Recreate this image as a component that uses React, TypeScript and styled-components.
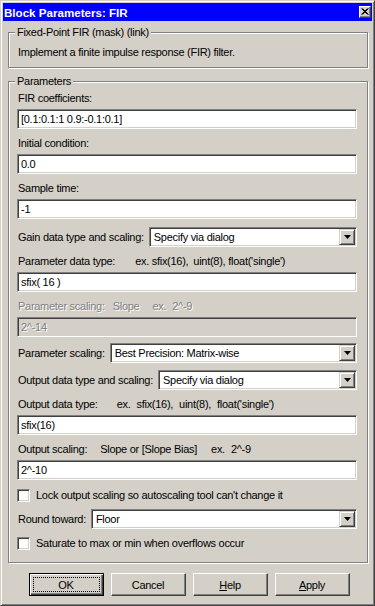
import styled, { createGlobalStyle, css } from 'styled-components';

const GlobalStyle = createGlobalStyle`
  html, body {
    margin: 0;
    padding: 0;
    background: #d4d0c8;
  }
  body {
    font-family: 'Liberation Sans', Arial, sans-serif;
    font-size: 11px;
  }
`;

const Window = styled.div`
  box-sizing: border-box;
  width: 375px;
  height: 606px;
  background: #d4d0c8;
  border: 1px solid;
  border-color: #d4d0c8 #404040 #404040 #d4d0c8;
  box-shadow: inset 1px 1px #fff, inset -1px -1px #808080;
  padding: 2px;
  display: flex;
  flex-direction: column;
  color: #000;
  letter-spacing: -0.28px;
`;

const TitleBar = styled.div`
  height: 18px;
  flex: none;
  background: #0000ff;
  display: flex;
  align-items: center;
  justify-content: space-between;
  padding: 0 1px 0 1px;
`;

const TitleText = styled.span`
  color: #fff;
  font-weight: bold;
  font-size: 11.6px;
  letter-spacing: 0;
`;

const CloseButton = styled.div`
  box-sizing: border-box;
  width: 12px;
  height: 12px;
  background: #d4d0c8;
  border: 1px solid;
  border-color: #fff #404040 #404040 #fff;
  box-shadow: inset -1px -1px #808080;
  display: flex;
  align-items: center;
  justify-content: center;
  margin-top: -1px;
`;

const Body = styled.div`
  flex: 1;
  display: flex;
  flex-direction: column;
  padding: 4px 4px 0 5px;
`;

const Group = styled.fieldset<{ $gap?: number; $bottom?: number }>`
  margin: ${({ $gap }) => $gap ?? 0}px 0 0 0;
  padding: 0 10px ${({ $bottom }) => $bottom ?? 12}px 8px;
  border: 1px solid #808080;
  box-shadow: inset 1px 1px #fff, 1px 1px #fff;
  min-width: 0;
`;

const Legend = styled.legend`
  padding: 0 2px;
  margin-left: -2px;
  background: #d4d0c8;
  line-height: 14px;
  height: 14px;
`;

const Description = styled.div`
  line-height: 14px;
  padding: 6px 0 0 1px;
`;

const Stack = styled.div`
  display: flex;
  flex-direction: column;
  padding-top: 3px;
`;

const FieldLabel = styled.div<{ $disabled?: boolean }>`
  height: 14px;
  line-height: 14px;
  margin: 7px 0 4px 1px;
  white-space: nowrap;
  &:first-child {
    margin-top: 0;
  }
  ${({ $disabled }) =>
    $disabled &&
    css`
      color: #808080;
      text-shadow: 1px 1px #fff;
    `}
`;

const Hint = styled.span<{ $gap: number }>`
  margin-left: ${({ $gap }) => $gap}px;
`;

const sunken = css`
  border: 1px solid;
  border-color: #808080 #fff #fff #808080;
  box-shadow: inset 1px 1px #404040, inset -1px -1px #d4d0c8;
`;

const TextBox = styled.div<{ $disabled?: boolean }>`
  box-sizing: border-box;
  height: 20px;
  ${sunken};
  background: ${({ $disabled }) => ($disabled ? '#d4d0c8' : '#fff')};
  color: ${({ $disabled }) => ($disabled ? '#808080' : '#000')};
  text-shadow: ${({ $disabled }) => ($disabled ? '1px 1px #fff' : 'none')};
  padding: 0 3px;
  line-height: 18px;
  white-space: nowrap;
`;

const SelectRow = styled.div<{ $gap: number }>`
  display: flex;
  align-items: center;
  gap: 5px;
  margin-top: ${({ $gap }) => $gap}px;
  padding-left: 1px;
  white-space: nowrap;
`;

const Combo = styled.div`
  box-sizing: border-box;
  flex: 1;
  height: 20px;
  ${sunken};
  background: #fff;
  display: flex;
  align-items: center;
  padding: 1px 1px 1px 4px;
`;

const ComboText = styled.span`
  flex: 1;
`;

const DropButton = styled.div`
  box-sizing: border-box;
  width: 16px;
  height: 16px;
  background: #d4d0c8;
  border: 1px solid;
  border-color: #d4d0c8 #404040 #404040 #d4d0c8;
  box-shadow: inset 1px 1px #fff, inset -1px -1px #808080;
  display: flex;
  align-items: center;
  justify-content: center;
`;

const CheckRow = styled.div<{ $gap: number }>`
  display: flex;
  align-items: center;
  height: 14px;
  margin-top: ${({ $gap }) => $gap}px;
  white-space: nowrap;
`;

const CheckBox = styled.div`
  box-sizing: border-box;
  width: 13px;
  height: 13px;
  ${sunken};
  background: #fff;
  margin-right: 6px;
`;

const Buttons = styled.div`
  display: flex;
  justify-content: center;
  gap: 7px;
  margin-top: 10px;
  padding-left: 2px;
`;

const Button = styled.div<{ $default?: boolean }>`
  box-sizing: border-box;
  width: 75px;
  height: 23px;
  display: flex;
  align-items: center;
  justify-content: center;
  background: #d4d0c8;
  border: 1px solid;
  border-color: #fff #404040 #404040 #fff;
  box-shadow: inset -1px -1px #808080;
  ${({ $default }) =>
    $default &&
    css`
      border-color: #000;
      box-shadow: inset 1px 1px #fff, inset -1px -1px #404040,
        inset -2px -2px #808080;
      padding: 3px;
    `}
`;

const FocusRing = styled.span`
  box-sizing: border-box;
  flex: 1;
  align-self: stretch;
  display: flex;
  align-items: center;
  justify-content: center;
  border: 1px dotted #000;
`;

function Arrow() {
  return (
    <svg width="7" height="4" viewBox="0 0 7 4">
      <path d="M0 0h7L3.5 4z" fill="#000" />
    </svg>
  );
}

function Select({ value }: { value: string }) {
  return (
    <Combo>
      <ComboText>{value}</ComboText>
      <DropButton>
        <Arrow />
      </DropButton>
    </Combo>
  );
}

export default function App() {
  return (
    <Window>
      <GlobalStyle />
      <TitleBar>
        <TitleText>Block Parameters: FIR</TitleText>
        <CloseButton>
          <svg width="8" height="7" viewBox="0 0 8 7">
            <path d="M0.5 0.5l6 6M6.5 0.5l-6 6M1.5 0.5l6 6M7.5 0.5l-6 6" stroke="#000" strokeWidth="1" />
          </svg>
        </CloseButton>
      </TitleBar>
      <Body>
        <Group $bottom={8}>
          <Legend>Fixed-Point FIR (mask) (link)</Legend>
          <Description>Implement a finite impulse response (FIR) filter.</Description>
        </Group>
        <Group $gap={6}>
          <Legend>Parameters</Legend>
          <Stack>
            <FieldLabel>FIR coefficients:</FieldLabel>
            <TextBox>[0.1:0.1:1 0.9:-0.1:0.1]</TextBox>
            <FieldLabel>Initial condition:</FieldLabel>
            <TextBox>0.0</TextBox>
            <FieldLabel>Sample time:</FieldLabel>
            <TextBox>-1</TextBox>
            <SelectRow $gap={8}>
              Gain data type and scaling:
              <Select value="Specify via dialog" />
            </SelectRow>
            <FieldLabel>
              Parameter data type:
              <Hint $gap={20}>ex. sfix(16),</Hint>
              <Hint $gap={5}>uint(8),</Hint>
              <Hint $gap={3}>float('single')</Hint>
            </FieldLabel>
            <TextBox>sfix( 16 )</TextBox>
            <FieldLabel $disabled>
              Parameter scaling:
              <Hint $gap={8}>Slope</Hint>
              <Hint $gap={13}>ex.</Hint>
              <Hint $gap={6}>2^-9</Hint>
            </FieldLabel>
            <TextBox $disabled>2^-14</TextBox>
            <SelectRow $gap={6}>
              Parameter scaling:
              <Select value="Best Precision: Matrix-wise" />
            </SelectRow>
            <SelectRow $gap={7}>
              Output data type and scaling:
              <Select value="Specify via dialog" />
            </SelectRow>
            <FieldLabel>
              Output data type:
              <Hint $gap={19}>ex.</Hint>
              <Hint $gap={6}>sfix(16),</Hint>
              <Hint $gap={6}>uint(8),</Hint>
              <Hint $gap={6}>float('single')</Hint>
            </FieldLabel>
            <TextBox>sfix(16)</TextBox>
            <FieldLabel>
              Output scaling:
              <Hint $gap={13}>Slope or [Slope Bias]</Hint>
              <Hint $gap={14}>ex.</Hint>
              <Hint $gap={6}>2^-9</Hint>
            </FieldLabel>
            <TextBox>2^-10</TextBox>
            <CheckRow $gap={8}>
              <CheckBox />
              Lock output scaling so autoscaling tool can't change it
            </CheckRow>
            <SelectRow $gap={7}>
              Round toward:
              <Select value="Floor" />
            </SelectRow>
            <CheckRow $gap={7}>
              <CheckBox />
              Saturate to max or min when overflows occur
            </CheckRow>
          </Stack>
        </Group>
        <Buttons>
          <Button $default>
            <FocusRing>OK</FocusRing>
          </Button>
          <Button>Cancel</Button>
          <Button>
            <span>
              <u>H</u>elp
            </span>
          </Button>
          <Button>
            <span>
              <u>A</u>pply
            </span>
          </Button>
        </Buttons>
      </Body>
    </Window>
  );
}
